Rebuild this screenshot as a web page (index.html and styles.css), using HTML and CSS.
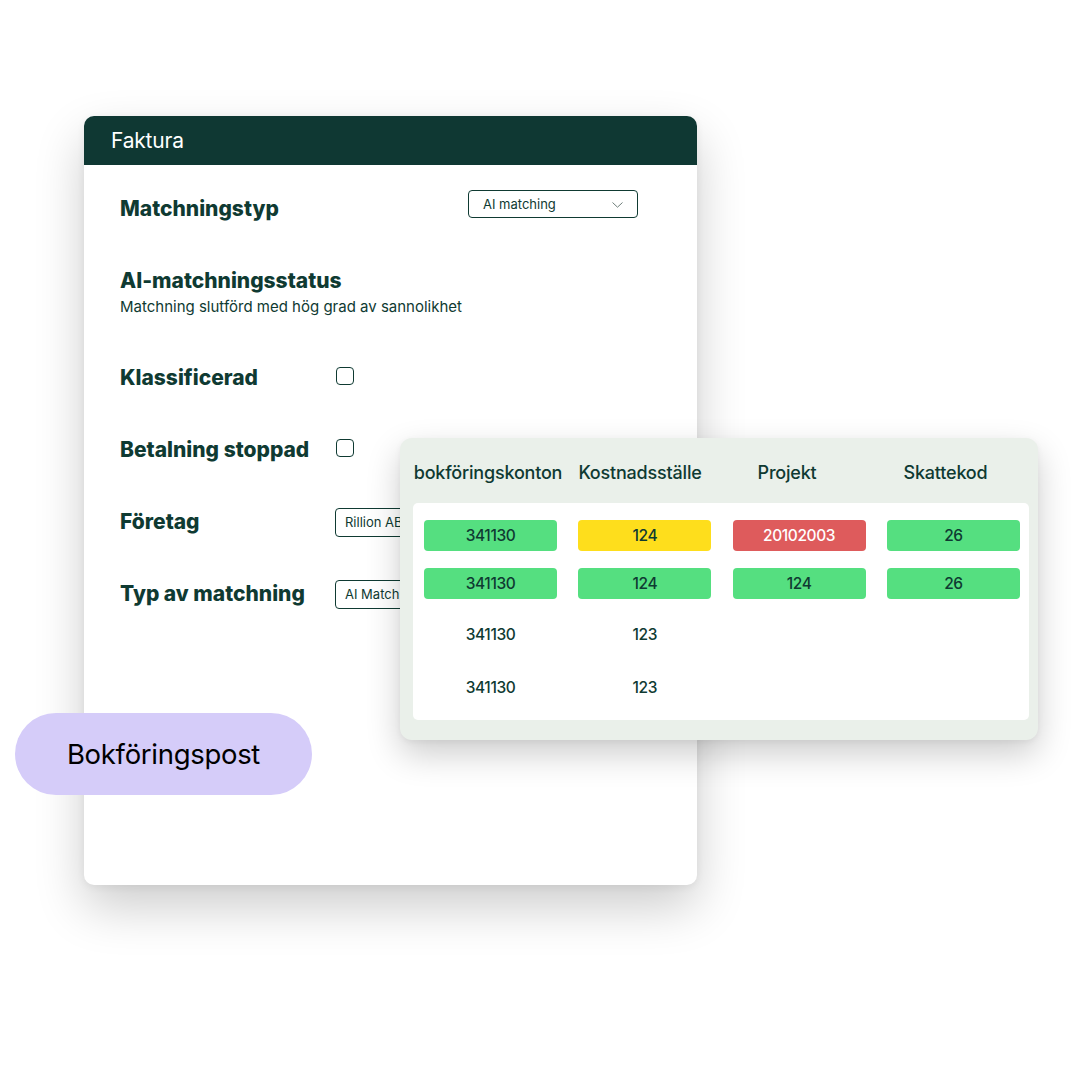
FILE: index.html
```html
<!DOCTYPE html>
<html lang="sv">
<head>
<meta charset="utf-8">
<title>Faktura</title>
<link rel="stylesheet" href="styles.css">
</head>
<body>
<div class="stage">
  <section class="invoice">
    <header class="invoice-head">Faktura</header>
    <div class="invoice-body">
      <div class="row-top">
        <h2 class="label">Matchningstyp</h2>
        <div class="select">
          <span>AI matching</span>
          <svg class="chev" width="11" height="6" viewBox="0 0 11 6"><path d="M0.5 0.5 L5.5 5.2 L10.5 0.5" fill="none" stroke="#6f7f7a" stroke-width="1"/></svg>
        </div>
      </div>
      <div class="status">
        <h2 class="label">AI-matchningsstatus</h2>
        <p class="sub">Matchning slutförd med hög grad av sannolikhet</p>
      </div>
      <div class="fields">
        <div class="field"><h2 class="label fl">Klassificerad</h2><span class="check"></span></div>
        <div class="field"><h2 class="label fl">Betalning stoppad</h2><span class="check"></span></div>
        <div class="field"><h2 class="label fl">Företag</h2><div class="input">Rillion AB</div></div>
        <div class="field"><h2 class="label fl">Typ av matchning</h2><div class="input">AI Matchning</div></div>
      </div>
    </div>
  </section>

  <section class="table-card">
    <div class="thead">
      <div>bokföringskonton</div>
      <div>Kostnadsställe</div>
      <div>Projekt</div>
      <div>Skattekod</div>
    </div>
    <div class="tpanel">
      <div class="cell green">341130</div>
      <div class="cell yellow">124</div>
      <div class="cell red">20102003</div>
      <div class="cell green">26</div>
      <div class="cell green">341130</div>
      <div class="cell green">124</div>
      <div class="cell green">124</div>
      <div class="cell green">26</div>
      <div class="cell plain">341130</div>
      <div class="cell plain">123</div>
      <div class="cell plain"></div>
      <div class="cell plain"></div>
      <div class="cell plain">341130</div>
      <div class="cell plain">123</div>
      <div class="cell plain"></div>
      <div class="cell plain"></div>
    </div>
  </section>

  <div class="pill">Bokföringspost</div>
</div>
</body>
</html>
```
FILE: styles.css
```css
* { box-sizing: border-box; }
html, body { margin: 0; padding: 0; background: #ffffff; }
body { font-family: Inter, "Open Sans", "Liberation Sans", sans-serif; color: #0f3a32; }

.stage {
  position: relative;
  width: 1080px;
  height: 1080px;
  padding: 116px 0 0 84px;
  overflow: hidden;
}

.invoice {
  width: 613px;
  height: 769px;
  background: #fff;
  border-radius: 10px;
  box-shadow: 0 22px 50px rgba(0, 0, 0, 0.20), 0 2px 8px rgba(0,0,0,0.06);
  overflow: hidden;
}
.invoice-head {
  height: 49px;
  background: #0f3833;
  color: #fff;
  font-size: 21px;
  font-weight: 400;
  letter-spacing: -0.2px;
  padding-left: 27px;
  display: flex;
  align-items: center;
}
.invoice-body { padding: 25px 59px 0 36px; }

.label {
  margin: 0;
  font-size: 21px;
  font-weight: 800;
  letter-spacing: 0;
  line-height: 26px;
  color: #0f3a32;
}
.row-top {
  display: flex;
  justify-content: space-between;
  align-items: flex-start;
  height: 28px;
}
.row-top .label { margin-top: 6px; }
.select {
  width: 170px;
  height: 28px;
  border: 1px solid #0f3a32;
  border-radius: 4px;
  display: flex;
  align-items: center;
  justify-content: space-between;
  padding: 0 14px 0 14px;
  font-size: 13px;
  color: #0f3a32;
}
.chev { margin-top: 1px; }

.status { margin-top: 50px; }
.sub {
  margin: 4px 0 0;
  font-size: 15px;
  line-height: 18px;
  letter-spacing: 0;
  color: #0f3a32;
}

.fields {
  margin-top: 47px;
  display: flex;
  flex-direction: column;
  gap: 42px;
}
.field {
  display: flex;
  align-items: center;
  min-height: 30px;
}
.fl { width: 216px; flex: none; }
.check {
  width: 18px;
  height: 18px;
  border: 1.5px solid #0f3a32;
  border-radius: 4px;
  margin-top: -4px;
}
.input {
  width: 171px;
  height: 29px;
  margin-left: -1px;
  border: 1px solid #0f3a32;
  border-radius: 4px;
  font-size: 13px;
  padding-left: 9px;
  display: flex;
  align-items: center;
  white-space: nowrap;
}

.table-card {
  position: absolute;
  left: 400px;
  top: 438px;
  width: 638px;
  height: 302px;
  background: #eaf0ea;
  border-radius: 12px;
  box-shadow: 0 14px 34px rgba(0, 0, 0, 0.20), 0 2px 6px rgba(0,0,0,0.05);
  padding: 0 9px 20px 13px;
}
.thead {
  height: 65px;
  padding-top: 3px;
  display: grid;
  grid-template-columns: 150px 154px 140px 177px;
  align-items: center;
  font-size: 18px;
  font-weight: 500;
  letter-spacing: -0.2px;
  color: #0f3a32;
  text-align: center;
  white-space: nowrap;
}
.tpanel {
  height: 217px;
  background: #fff;
  border-radius: 5px;
  padding: 17px 9px 0 11px;
  display: grid;
  grid-template-columns: repeat(4, 133px);
  grid-template-rows: 31px 31px 36px 36px;
  column-gap: 21.3px;
  row-gap: 17px;
}
.cell {
  border-radius: 4px;
  display: flex;
  align-items: center;
  justify-content: center;
  font-size: 15.5px;
  font-weight: 500;
  letter-spacing: -0.4px;
  color: #0f3a32;
}
.green { background: #55df80; }
.yellow { background: #fede1c; }
.red { background: #de5b5c; color: #fff; }
.plain { background: transparent; }

.pill {
  position: absolute;
  left: 15px;
  top: 713px;
  width: 297px;
  height: 82px;
  border-radius: 41px;
  background: #d5ccf9;
  color: #000;
  font-size: 27.5px;
  font-weight: 400;
  letter-spacing: -0.3px;
  display: flex;
  align-items: center;
  justify-content: center;
}
```
